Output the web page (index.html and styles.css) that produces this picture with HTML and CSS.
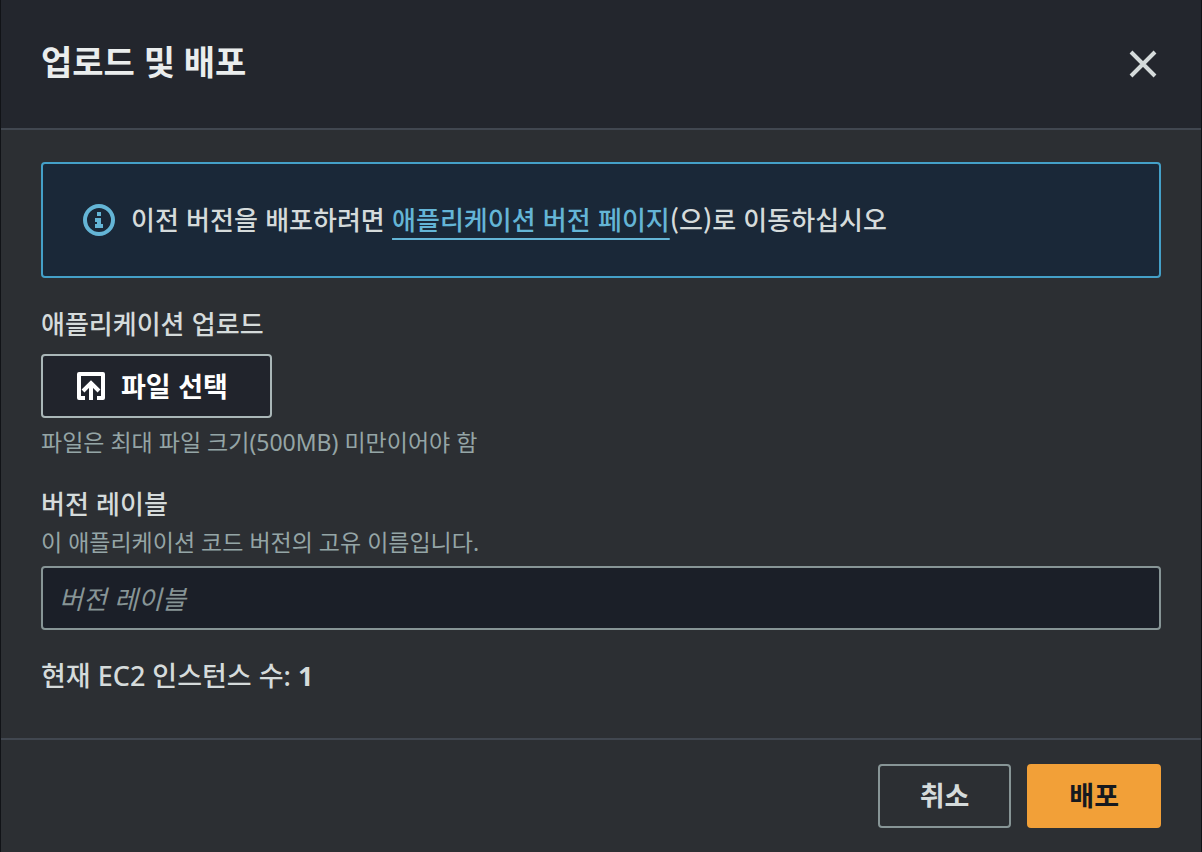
FILE: index.html
```html
<!DOCTYPE html>
<html lang="ko">
<head>
    <meta charset="UTF-8">
    <meta name="viewport" content="width=device-width, initial-scale=1.0">
    <title>업로드 및 배포</title>
    <link rel="stylesheet" href="styles.css">
</head>
<body>
    <form class="modal" role="dialog" aria-labelledby="modal-title">
        <header class="modal-header">
            <h1 id="modal-title">업로드 및 배포</h1>
            <button type="button" class="close-button" aria-label="닫기">
                <svg width="32" height="32" viewBox="0 0 32 32" fill="none" stroke="currentColor" stroke-width="4">
                    <path d="M4 4l24 24M28 4L4 28"/>
                </svg>
            </button>
        </header>

        <main class="modal-content">
            <div class="alert">
                <svg class="alert-icon" width="32" height="32" viewBox="0 0 32 32">
                    <circle cx="16" cy="16" r="14" fill="none" stroke="currentColor" stroke-width="4"/>
                    <path fill="currentColor" d="M14 8h4v4h-4zM12 14h6v6h2v4h-8v-4h2v-2h-2z"/>
                </svg>
                <p>이전 버전을 배포하려면 <a href="#">애플리케이션 버전 페이지</a>(으)로 이동하십시오</p>
            </div>

            <div class="field">
                <span class="label" id="upload-label">애플리케이션 업로드</span>
                <button type="button" class="button upload-button" aria-describedby="upload-label upload-hint">
                    <svg width="28" height="28" viewBox="0 0 28 28" fill="none" stroke="currentColor" stroke-width="4">
                        <path stroke-linejoin="round" d="M8 26H2V2h24v24h-6"/>
                        <path d="M14 28V10M6 19l8-8 8 8"/>
                    </svg>
                    파일 선택
                </button>
                <p class="hint" id="upload-hint">파일은 최대 파일 크기(500MB) 미만이어야 함</p>
            </div>

            <div class="field">
                <label class="label" for="version-label">버전 레이블</label>
                <p class="description" id="version-description">이 애플리케이션 코드 버전의 고유 이름입니다.</p>
                <input type="text" id="version-label" placeholder="버전 레이블" aria-describedby="version-description">
            </div>

            <p class="instances">현재 EC2 인스턴스 수: <strong>1</strong></p>
        </main>

        <footer class="modal-footer">
            <button type="button" class="button">취소</button>
            <button type="submit" class="button primary">배포</button>
        </footer>
    </form>
</body>
</html>
```
FILE: styles.css
```css
* {
    box-sizing: border-box;
}

body {
    margin: 0;
    background-color: #111317;
    color: #d5dbdb;
    font-family: "Noto Sans CJK KR", sans-serif;
    font-size: 26px;
    font-weight: 500;
    line-height: 38px;
}

h1,
p {
    margin: 0;
}

.modal {
    display: flex;
    flex-direction: column;
    min-height: 100vh;
    margin: 0 1px;
    background-color: #2c2f33;
}

.modal-header {
    display: flex;
    align-items: center;
    justify-content: space-between;
    padding: 38px 40px 42px;
    background-color: #23262d;
    border-bottom: 2px solid #414750;
}

.modal-header h1 {
    color: #eaeded;
    font-family: "Noto Sans", "Noto Sans CJK KR", sans-serif;
    font-size: 34px;
    font-weight: 700;
    line-height: 48px;
}

.close-button {
    display: flex;
    padding: 4px 2px 0;
    border: none;
    background: none;
    color: #d5dbdb;
    cursor: pointer;
}

.modal-content {
    display: flex;
    flex: 1;
    flex-direction: column;
    gap: 24px;
    padding: 32px 40px 40px;
}

.alert {
    display: flex;
    align-items: flex-start;
    gap: 16px;
    padding: 36px 40px 38px;
    border: 2px solid #44a0c8;
    border-radius: 4px;
    background-color: #1a2838;
}

.alert-icon {
    flex: none;
    margin-top: 4px;
    color: #64b5d6;
}

.alert a {
    color: #64b5d6;
    text-decoration: underline;
    text-decoration-thickness: 2px;
    text-underline-offset: 8px;
    text-decoration-skip-ink: none;
}

.field {
    display: flex;
    flex-direction: column;
    align-items: flex-start;
}

.label {
    line-height: 42px;
}

.instances {
    font-size: 27px;
    line-height: 44px;
}

.instances,
.hint,
.description {
    font-family: "Noto Sans", "Noto Sans CJK KR", sans-serif;
}

.button {
    height: 64px;
    padding: 0 40px 2px;
    border: 2px solid #879596;
    border-radius: 4px;
    background: none;
    color: #d5dbdb;
    font: inherit;
    font-size: 27px;
    font-weight: 700;
    cursor: pointer;
}

.upload-button {
    display: flex;
    align-items: center;
    gap: 16px;
    margin: 10px 0 8px;
    padding: 0 42px 0 34px;
    border-color: #aab7b8;
    background-color: #21242c;
    color: #fff;
}

.primary {
    border-color: #f2a038;
    background-color: #f2a038;
    color: #16191f;
}

.hint,
.description {
    color: #95a5a6;
    font-size: 23px;
    font-weight: 400;
    line-height: 32px;
}

.description {
    margin: 2px 0 8px;
}

input {
    width: 100%;
    height: 64px;
    padding: 0 16px 2px;
    border: 2px solid #879596;
    border-radius: 4px;
    background-color: #1b1f28;
    color: #d5dbdb;
    font: inherit;
}

input::placeholder {
    color: #879596;
    font-style: italic;
    font-weight: 400;
    opacity: 1;
}

.modal-footer {
    display: flex;
    justify-content: flex-end;
    gap: 16px;
    padding: 24px 40px;
    border-top: 2px solid #414750;
}
```
